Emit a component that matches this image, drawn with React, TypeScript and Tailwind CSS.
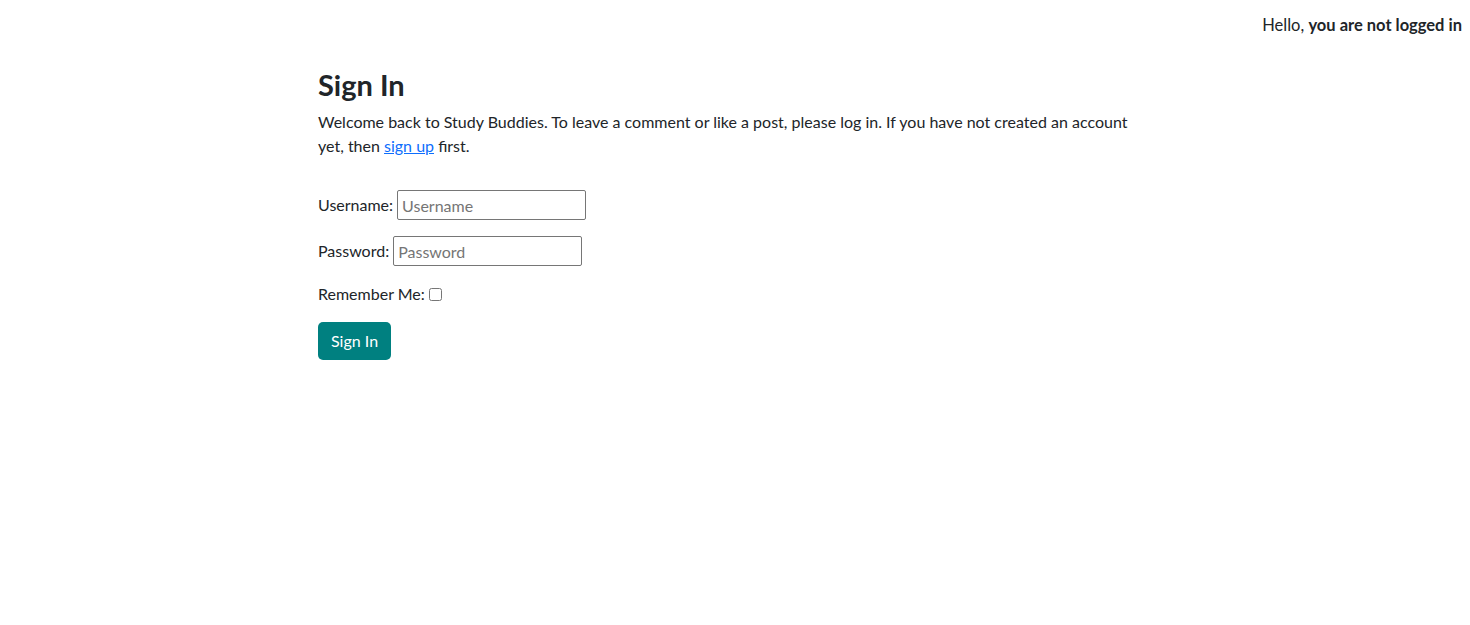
import React from 'react'

const font = { fontFamily: 'Lato, "Noto Sans", sans-serif' }

export default function App() {
  return (
    <div className="min-h-screen bg-white text-[#212529] text-[16px] leading-6 font-['Lato',_'Noto_Sans',_sans-serif]">
      {/* top bar */}
      <div className="flex justify-end pr-[8px] pt-[13px]">
        <p className="text-[16.5px]">
          Hello, <strong className="font-bold">you are not logged in</strong>
        </p>
      </div>

      <main className="w-[830px] ml-[318px] mt-[31px]">
        <h1 className="text-[29px] leading-[34px] font-bold mb-[8px]">Sign In</h1>
        <p className="mb-[32px]">
          Welcome back to Study Buddies. To leave a comment or like a post, please log in. If you have not
          created an account yet, then{' '}
          <a href="#" className="text-[#0d6efd] underline">
            sign up
          </a>{' '}
          first.
        </p>

        <form className="flex flex-col">
          <p className="flex items-center mb-[16px]">
            <label htmlFor="id_login">Username:</label>
            <input
              id="id_login"
              type="text"
              placeholder="Username"
              className="ml-[4px] w-[189px] h-[30px] border border-[#767676] rounded-[2px] px-[4px] text-[16px] placeholder:text-[#757575] outline-none"
              style={font}
            />
          </p>
          <p className="flex items-center mb-[16px]">
            <label htmlFor="id_password">Password:</label>
            <input
              id="id_password"
              type="password"
              placeholder="Password"
              className="ml-[4px] w-[189px] h-[30px] border border-[#767676] rounded-[2px] px-[4px] text-[16px] placeholder:text-[#757575] outline-none"
              style={font}
            />
          </p>
          <p className="flex items-center mb-[16px] h-[24px]">
            <label htmlFor="id_remember">Remember Me:</label>
            <input id="id_remember" type="checkbox" className="ml-[4px] w-[13px] h-[13px]" />
          </p>
          <div>
            <button
              type="button"
              className="bg-[#008080] text-white rounded-[5px] h-[38px] px-[13px] text-[16px]"
            >
              Sign In
            </button>
          </div>
        </form>
      </main>
    </div>
  )
}
